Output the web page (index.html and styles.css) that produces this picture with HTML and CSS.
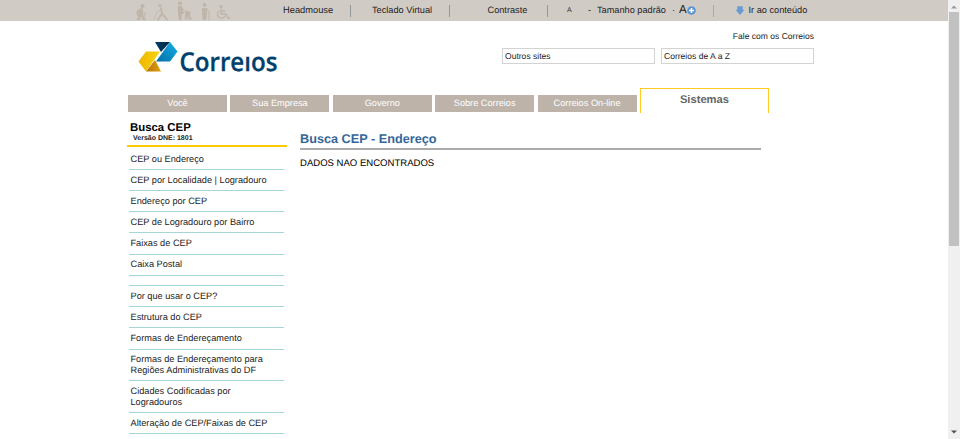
FILE: index.html
```html
<!DOCTYPE html>
<html lang="pt-BR">
<head>
<meta charset="utf-8">
<title>Correios - Busca CEP</title>
<link rel="stylesheet" href="styles.css">
</head>
<body>
<div class="viewport">
  <div class="page">
    <div class="access">
      <svg class="people" width="92" height="21" viewBox="0 0 92 21" fill="#bfb5a9" stroke="#bfb5a9" stroke-linecap="round" stroke-linejoin="round">
        <g><circle cx="6.500" cy="6" r="2.1" stroke="none"/><path d="M6 8 Q0 9 .5 14 L2 17 L.5 20 H4 L5 16 L6.500 20 H9 L7 14 L7 9Z" stroke="none"/><path d="M5 11 L8.500 13 M9 12.500 V20" fill="none" stroke-width=".9"/></g>
        <g><circle cx="24" cy="5.500" r="1.6" stroke="none"/><path d="M25 8.500 L26 13.500 L22 19.500 M26 13.500 L31 19.500" fill="none" stroke-width="1.8"/><path d="M25 10 L21 12 L18 19" fill="none" stroke-width=".7"/></g>
        <g><circle cx="44" cy="3.200" r="1.9" stroke="none"/><path d="M42 6 H46 L48 14 H46 L45.500 20 H43 L42 14Z" stroke="none"/><path d="M46 8 L49 11" fill="none"/><path d="M49 12 Q51 9 53.500 12 L54.500 11 L54 17 H49Z" stroke="none"/><circle cx="50" cy="18.300" r="1.2" fill="none"/><circle cx="54" cy="18.300" r="1.2" fill="none"/></g>
        <g><circle cx="68.500" cy="4.800" r="1.9" stroke="none"/><path d="M66 8 H71 L71 14 L70 20 H67 L66 14Z" stroke="none"/><path d="M71 9 L73 12 V20" fill="none" stroke-width=".9"/></g>
        <g fill="none" stroke-width="1.3"><circle cx="85" cy="6.500" r="1" fill="#bfb5a9"/><path d="M85 9 V14 H90 L92 18 H94 M85 11 H89 M83 11 A4 4 0 1 0 89 16"/></g>
      </svg>
      <a class="headmouse">Headmouse</a><i></i>
      <a class="teclado">Teclado Virtual</a><i></i>
      <a class="contraste">Contraste</a><i></i>
      <a class="small-a">A</a><b class="dot first">-</b>
      <a class="default-size">Tamanho padrão</a><b class="dot">·</b>
      <a class="big-a">A</a>
      <svg class="plus" width="9" height="9" viewBox="0 0 9 9"><circle cx="4.500" cy="4.500" r="4.300" fill="#5c96d0"/><path d="M4.500 2V7M2 4.500H7" stroke="#fff" stroke-width="1.500"/></svg>
      <i class="last"></i>
      <svg class="arrow" width="8" height="9" viewBox="0 0 8 9"><path d="M1.500 .5H6.500V4H8L4 8.700L0 4H1.500Z" fill="#649bd2" stroke="#649bd2" stroke-width=".4"/></svg>
      <a class="skip">Ir ao conteúdo</a>
    </div>
    <header>
      <svg class="logo" width="142" height="36" viewBox="0 0 142 36" role="img" aria-label="Correios">
        <defs>
          <linearGradient id="gold"><stop offset="0" stop-color="#eeb500"/><stop offset="1" stop-color="#f6d414"/></linearGradient>
          <linearGradient id="bronze"><stop offset="0" stop-color="#b6720b"/><stop offset="1" stop-color="#dda20c"/></linearGradient>
          <linearGradient id="navy"><stop offset="0" stop-color="#003e6c"/><stop offset="1" stop-color="#00233f"/></linearGradient>
          <linearGradient id="sky" x1="0" y1="1" x2="1" y2="0"><stop offset="0" stop-color="#006da5"/><stop offset="1" stop-color="#17b1ea"/></linearGradient>
        </defs>
        <path d="M8 30.500H23L17 19Z" fill="url(#bronze)"/>
        <path d="M8 10.500H22L8 30.500L.5 20.500Z" fill="url(#gold)"/>
        <path d="M17 1H32L23 11Z" fill="url(#navy)"/>
        <path d="M32 1L39.500 10.500L32 20.500H18Z" fill="url(#sky)"/>
        <text class="wordmark" x="41.500" y="29.500" textLength="98" lengthAdjust="spacingAndGlyphs">Correios</text>
        <path d="M106 6H114V14.200H106Z" fill="#fff"/>
      </svg>
      <div class="tools">
        <a class="contact">Fale com os Correios</a>
        <div class="selects"><div class="select">Outros sites</div><div class="select">Correios de A a Z</div></div>
      </div>
    </header>
    <nav class="tabs">
      <a>Você</a><a>Sua Empresa</a><a>Governo</a><a>Sobre Correios</a><a>Correios On-line</a><a class="active">Sistemas</a>
    </nav>
    <div class="columns">
      <aside>
        <div class="menu-head"><h2>Busca CEP</h2><p>Versão DNE: 1801</p></div>
        <ul>
          <li>CEP ou Endereço</li>
          <li>CEP por Localidade | Logradouro</li>
          <li>Endereço por CEP</li>
          <li>CEP de Logradouro por Bairro</li>
          <li>Faixas de CEP</li>
          <li>Caixa Postal</li>
          <li></li>
          <li>Por que usar o CEP?</li>
          <li>Estrutura do CEP</li>
          <li>Formas de Endereçamento</li>
          <li>Formas de Endereçamento para<br>Regiões Administrativas do DF</li>
          <li>Cidades Codificadas por<br>Logradouros</li>
          <li>Alteração de CEP/Faixas de CEP</li>
          <li>Busca por Área</li>
        </ul>
      </aside>
      <main>
        <h1>Busca CEP - Endereço</h1>
        <p>DADOS NAO ENCONTRADOS</p>
      </main>
    </div>
  </div>
  <div class="scrollbar">
    <svg width="6" height="4" viewBox="0 0 6 4"><path d="M0 3.500L3 .5L6 3.500Z" fill="#999"/></svg>
    <div class="thumb"></div>
    <svg class="down" width="6" height="4" viewBox="0 0 6 4"><path d="M0 .5L3 3.500L6 .5Z" fill="#505050"/></svg>
  </div>
</div>
</body>
</html>
```

FILE: styles.css
```css
* { box-sizing: border-box; }
body { margin: 0; font: 9.2px/11px "Liberation Sans", Arial, sans-serif; color: #222; background: #fff; overflow: hidden; text-rendering: geometricPrecision; }
.viewport { display: flex; height: 439px; overflow: hidden; }
.page { flex: 1; min-width: 0; }
a { white-space: nowrap; }

.access { display: flex; align-items: center; height: 21px; background: #d1cbc6; padding-left: 136px; color: #1c1c1c; }
.access a, .dot { flex: none; }
.access i { flex: none; width: 1px; height: 12px; background: #91999b; }
.people { flex: none; margin-right: 55px; overflow: visible; }
.headmouse { width: 67px; font-size: 9.3px; }
.teclado { width: 77px; margin-left: 21px; }
.contraste { width: 59px; margin-left: 37.500px; }
.small-a { width: 21px; margin-left: 19.500px; font-size: 7px; }
.dot { width: 7px; font-weight: normal; }
.dot.first { width: 9px; }
.default-size { width: 75px; }
.big-a { width: 8px; font-size: 11.500px; }
.plus { flex: none; }
.access i.last { margin: 0 22px 0 17px; background: #aaa8a5; }
.arrow { flex: none; margin-right: 4.500px; }

header { display: flex; justify-content: space-between; height: 67px; padding: 10px 134px 0 138px; }
.logo { margin-top: 10px; }
.wordmark { font: 600 26px "Open Sans", sans-serif; fill: #00406c; stroke: #00406c; stroke-width: .3px; }
.tools { width: 312px; font-size: 8.55px; }
.contact { display: block; text-align: right; }
.selects { display: flex; gap: 7px; margin-top: 6px; }
.select { width: 153px; height: 16px; padding: 2px; border: 1px solid #d3d3d3; }
.select + .select { width: 153px; margin-left: -1px; }

.tabs { display: flex; align-items: flex-end; gap: 3.400px; height: 25px; padding-left: 128px; }
.tabs a { width: 99px; height: 17px; margin-bottom: 1px; background: #bdb3a9; color: #fff; text-align: center; line-height: 17px; }
.tabs a.active { width: 129px; height: 25px; margin-bottom: 0; background: #fff; border: 1px solid #fccc24; border-bottom: 0; color: #666; font-size: 11.2px; font-weight: bold; line-height: 22px; }

.columns { display: flex; padding-left: 127px; }
aside { flex: none; width: 160px; height: 326px; overflow: hidden; }
.menu-head { height: 34px; padding: 8px 0 0 3px; border-bottom: 2px solid #fccb04; }
h1, h2, p, ul { margin: 0; padding: 0; }
h2 { font-size: 11.4px; line-height: 14px; color: #000; }
.menu-head p { padding-left: 3px; font-size: 7px; line-height: 8px; font-weight: bold; color: #222; }
ul { width: 155px; margin: 1.800px 0 0 2px; list-style: none; }
li { padding: 4.800px 0 4.700px 1.500px; border-bottom: 1px solid #a5d5d5; line-height: 10.65px; white-space: nowrap; }
main { width: 461px; margin: 19px 0 0 13px; }
h1 { height: 18px; border-bottom: 2px solid #aaa; color: #336699; font-size: 12.7px; line-height: 14px; }
main p { margin-top: 8px; font-size: 9.55px; color: #000; }

.scrollbar { display: flex; flex-direction: column; align-items: center; width: 12px; padding: 5px 0 5px; background: #f0f0f0; }
.thumb { width: 10px; height: 234px; margin-top: 3px; background: #c1c1c1; }
.scrollbar .down { margin-top: auto; }
```
